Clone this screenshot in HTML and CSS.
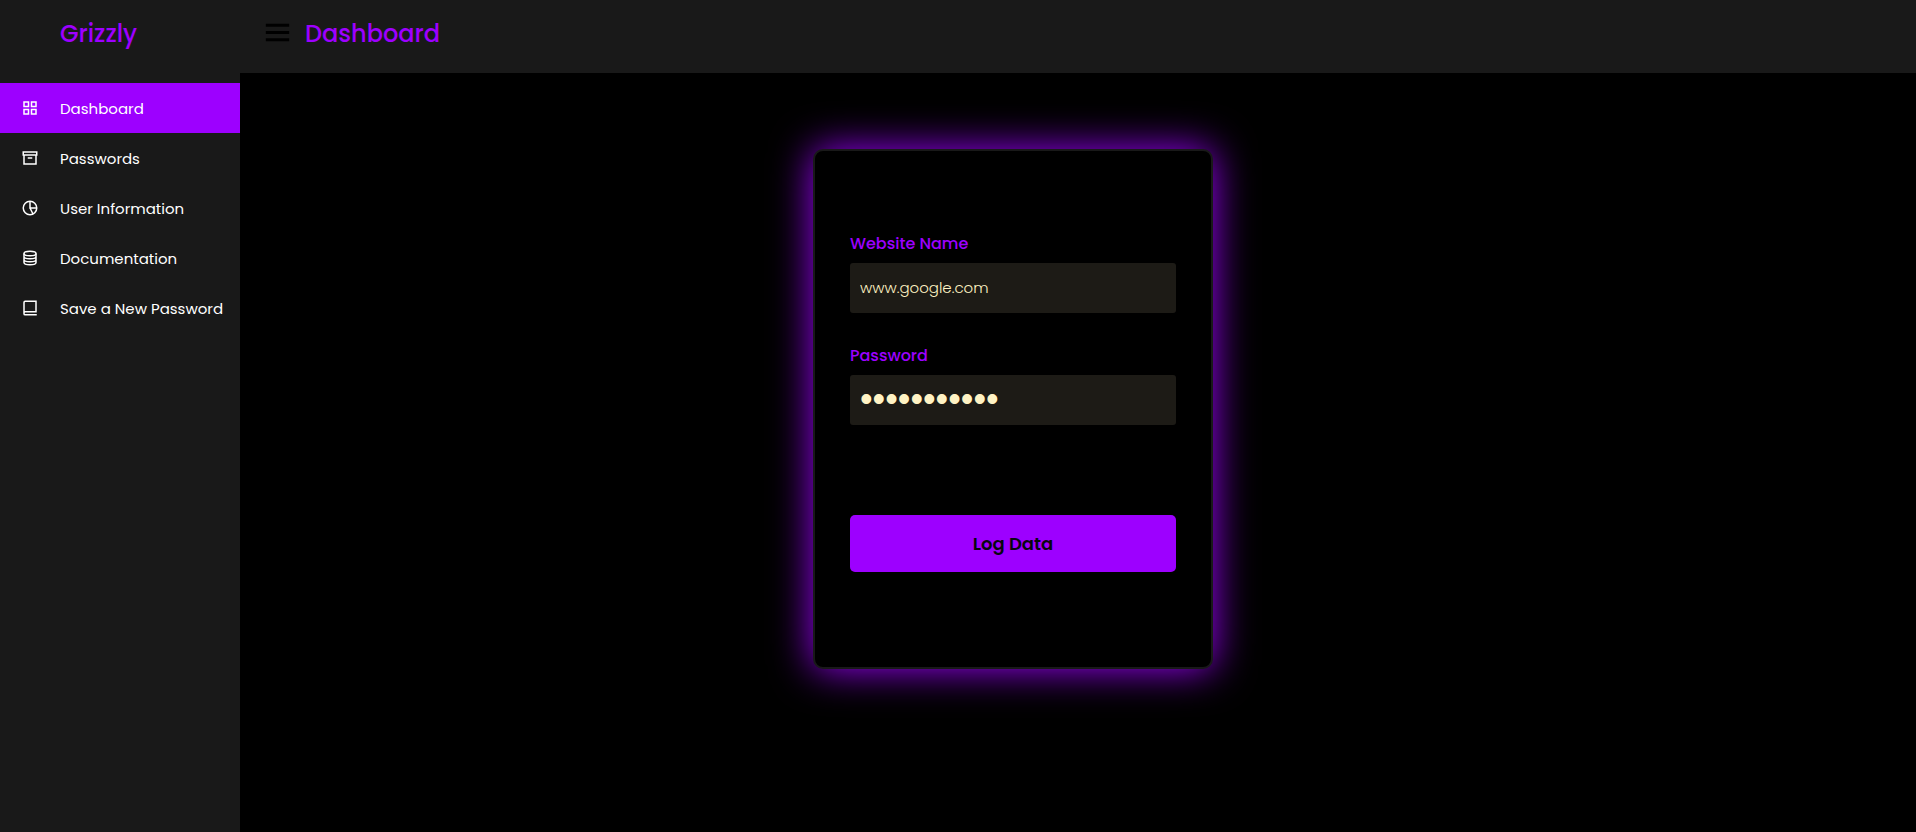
FILE: index.html
```html
<!DOCTYPE html>
<html lang="en">
<head>
<meta charset="utf-8">
<meta name="viewport" content="width=device-width, initial-scale=1">
<title>Grizzly Dashboard</title>
<link rel="stylesheet" href="styles.css">
</head>
<body>
<aside class="sidebar">
  <div class="brand">Grizzly</div>
  <nav class="nav">
    <a class="nav-link active" href="#">
      <svg class="icon" viewBox="0 0 24 24"><path d="M4 4h6v6H4zM14 4h6v6h-6zM4 14h6v6H4zM14 14h6v6h-6z"/></svg>
      <span>Dashboard</span>
    </a>
    <a class="nav-link" href="#">
      <svg class="icon" viewBox="0 0 24 24"><path d="M3 4h18v4H3zM4 8v12h16V8M9 12h6"/></svg>
      <span>Passwords</span>
    </a>
    <a class="nav-link" href="#">
      <svg class="icon" viewBox="0 0 24 24"><circle cx="12" cy="12" r="9"/><path d="M12 3v9h9M12 12l4 8"/></svg>
      <span>User Information</span>
    </a>
    <a class="nav-link" href="#">
      <svg class="icon" viewBox="0 0 24 24"><ellipse cx="12" cy="6" rx="8" ry="3"/><path d="M4 6v12c0 1.700 3.600 3 8 3s8-1.300 8-3V6M4 10c0 1.700 3.600 3 8 3s8-1.300 8-3M4 14c0 1.700 3.600 3 8 3s8-1.300 8-3"/></svg>
      <span>Documentation</span>
    </a>
    <a class="nav-link" href="#">
      <svg class="icon" viewBox="0 0 24 24"><path d="M21 21H5.500C4.500 21 4 20.500 4 19.500V4.500C4 3.500 4.500 3 5.500 3H20v14H5.500C4.500 17 4 17.500 4 19"/></svg>
      <span>Save a New Password</span>
    </a>
  </nav>
</aside>
<div class="page">
  <header class="topbar">
    <button class="menu" type="button" aria-label="Toggle menu">
      <svg viewBox="0 0 24 24"><path d="M4 6h16v2H4zM4 11h16v2H4zM4 16h16v2H4z"/></svg>
    </button>
    <h1 class="title">Dashboard</h1>
  </header>
  <main class="content">
    <form class="card">
      <div class="field">
        <label for="site">Website Name</label>
        <input id="site" type="text" value="www.google.com">
      </div>
      <div class="field">
        <label for="password">Password</label>
        <input id="password" class="secret" type="password" value="grizzly1234">
      </div>
      <button class="submit" type="button">Log Data</button>
    </form>
  </main>
</div>
</body>
</html>
```

FILE: styles.css
```css
* {
  box-sizing: border-box;
  margin: 0;
  padding: 0;
}

body {
  display: flex;
  min-height: 100vh;
  background: #000;
  font-family: Poppins, Inter, sans-serif;
}

.sidebar {
  flex: 0 0 240px;
  background: #191919;
}

.brand {
  padding: 15px 0 30px 60px;
  color: #9d00ff;
  font-size: 24px;
  font-weight: 500;
  line-height: 38px;
}

.nav-link {
  display: flex;
  align-items: center;
  height: 50px;
  color: #fff;
  font-size: 15px;
  text-decoration: none;
  white-space: nowrap;
}

.nav-link.active {
  background: #9d00ff;
}

.icon {
  flex: none;
  width: 18px;
  height: 18px;
  margin: 0 21px;
  fill: none;
  stroke: currentColor;
  stroke-width: 2;
}

.page {
  flex: 1;
  display: flex;
  flex-direction: column;
}

.topbar {
  display: flex;
  align-items: flex-start;
  gap: 10px;
  padding: 15px 20px 20px;
  background: #191919;
}

.menu {
  display: flex;
  border: 0;
  background: none;
  cursor: pointer;
}

.menu svg {
  width: 35px;
  height: 35px;
}

.title {
  color: #9d00ff;
  font-size: 24px;
  font-weight: 500;
  line-height: 38px;
}

.content {
  display: flex;
  justify-content: center;
  padding: 76px 130px 76px 0;
}

.card {
  display: flex;
  flex-direction: column;
  gap: 30px;
  width: 400px;
  padding: 80px 35px 95px;
  border: 2px solid #191919;
  border-radius: 10px;
  background: #000;
  box-shadow: 0 0 40px #9d00ff;
}

.field {
  display: flex;
  flex-direction: column;
  gap: 6px;
}

.field label {
  color: #9d00ff;
  font-size: 16px;
  font-weight: 500;
  line-height: 26px;
}

.field input {
  width: 100%;
  height: 50px;
  padding: 0 10px 2px;
  border: 0;
  border-radius: 3px;
  outline: 0;
  background: #1d1b16;
  color: #fff3c4;
  font-family: inherit;
  font-size: 15px;
  font-weight: 300;
}

.field .secret {
  font-family: "Liberation Sans", Arial, sans-serif;
  font-size: 36px;
}

.submit {
  margin-top: 60px;
  padding: 15px 0;
  border: 0;
  border-radius: 5px;
  background: #9d00ff;
  color: #080710;
  font-family: inherit;
  font-size: 18px;
  font-weight: 600;
  line-height: 27px;
  cursor: pointer;
}
```
